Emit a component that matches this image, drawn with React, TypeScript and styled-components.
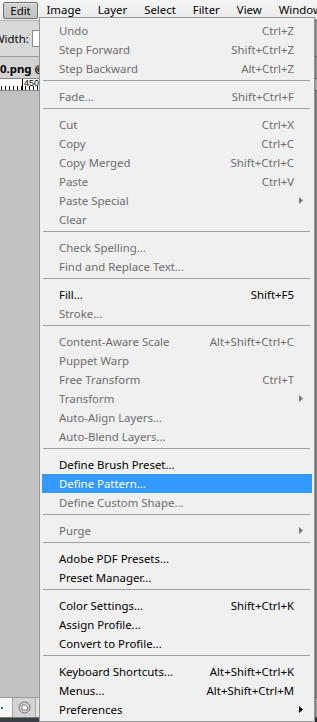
import styled, { createGlobalStyle } from "styled-components";

const GlobalStyle = createGlobalStyle`
  html, body {
    margin: 0;
    padding: 0;
    background: #c2c2c2;
  }
  body {
    font-family: "Noto Sans", "Segoe UI", sans-serif;
    font-size: 11.4px;
  }
`;

const Window = styled.div`
  position: relative;
  width: 317px;
  height: 722px;
  overflow: hidden;
  display: flex;
  flex-direction: column;
  background: #c2c2c2;
`;

const MenuBar = styled.div`
  height: 20px;
  flex-shrink: 0;
  display: flex;
  align-items: center;
  padding-left: 3px;
  overflow: hidden;
  background: linear-gradient(#f5f5f5, #ebebeb);
  border-bottom: 1px solid #b4b4b4;
  white-space: nowrap;
`;

const MenuTitle = styled.div<{ $active?: boolean }>`
  flex-shrink: 0;
  height: 17px;
  line-height: 16px;
  padding: 0 8.5px;
  box-sizing: border-box;
  color: #000;
  ${(p) =>
    p.$active &&
    `
    width: 35px;
    padding: 0;
    text-align: center;
    background: linear-gradient(#d2d2d2, #c2c2c2);
    border: 1px solid #6f6f6f;
    border-radius: 2px;
    box-shadow: inset 0 1px 0 #e4e4e4;
  `}
`;

const OptionsBar = styled.div`
  height: 35px;
  flex-shrink: 0;
  display: flex;
  align-items: center;
  gap: 3px;
  background: #d9d9d9;
  border-bottom: 1px solid #9c9c9c;
`;

const OptionLabel = styled.span`
  margin-left: -6px;
  color: #000;
`;

const OptionInput = styled.div`
  width: 40px;
  height: 15px;
  background: #fff;
  border: 1px solid #8e8e8e;
`;

const DocTab = styled.div`
  height: 22px;
  flex-shrink: 0;
  box-sizing: border-box;
  display: flex;
  align-items: flex-end;
  padding-bottom: 2px;
  background: #d3d3d3;
  border-bottom: 1px solid #8a8a8a;
  font-weight: bold;
  color: #000;
  white-space: nowrap;
`;

const Ruler = styled.div`
  position: relative;
  height: 11px;
  flex-shrink: 0;
  background: #fff;
  border-bottom: 1px solid #8a8a8a;
`;

const RulerNum = styled.span`
  position: absolute;
  left: 24px;
  top: -1px;
  font-family: "Liberation Sans", Arial, sans-serif;
  font-size: 9px;
  line-height: 10px;
  color: #000;
`;

const Canvas = styled.div`
  flex: 1;
  background: #c2c2c2;
`;

const StatusBar = styled.div`
  height: 19px;
  flex-shrink: 0;
  display: flex;
  border-top: 1px solid #9a9a9a;
  border-bottom: 1px solid #7a7a7a;
  background: #e2e2e2;
`;

const StatusField = styled.div`
  width: 12px;
  background: #f7f7f7;
  border-right: 1px solid #a6a6a6;
  position: relative;
  &::after {
    content: "";
    position: absolute;
    left: 1px;
    top: 9px;
    width: 2px;
    height: 2px;
    background: #2a5fb0;
  }
`;

const StatusButton = styled.div`
  width: 22px;
  display: flex;
  align-items: center;
  justify-content: center;
  background: #d4d4d4;
  border-right: 1px solid #a6a6a6;
`;

const BottomStrip = styled.div`
  height: 4px;
  flex-shrink: 0;
  background: #3b3f45;
`;

const Dropdown = styled.div`
  position: absolute;
  left: 39px;
  top: 17px;
  width: 274px;
  padding: 3px 0 2px;
  background: #f0f0f0;
  border: 1px solid #979797;
  box-shadow: 2px 2px 2px rgba(0, 0, 0, 0.45);
`;

const Row = styled.div<{ $disabled?: boolean; $hover?: boolean }>`
  height: 19px;
  margin: 0 2px;
  padding-left: 17px;
  display: grid;
  grid-template-columns: 1fr auto 18px;
  align-items: center;
  white-space: nowrap;
  color: ${(p) => (p.$hover ? "#fff" : p.$disabled ? "#6d6d6d" : "#000")};
  background: ${(p) => (p.$hover ? "#3399ff" : "transparent")};
`;

const Shortcut = styled.span`
  text-align: right;
`;

const ArrowCell = styled.span`
  display: flex;
  align-items: center;
  padding-left: 5px;
`;

const Separator = styled.div`
  height: 1px;
  margin: 2px 4px 6px 3px;
  background: #a0a0a0;
`;

type Item =
  | "sep"
  | { label: string; sc?: string; dis?: boolean; sub?: boolean; hover?: boolean };

const items: Item[] = [
  { label: "Undo", sc: "Ctrl+Z", dis: true },
  { label: "Step Forward", sc: "Shift+Ctrl+Z", dis: true },
  { label: "Step Backward", sc: "Alt+Ctrl+Z", dis: true },
  "sep",
  { label: "Fade...", sc: "Shift+Ctrl+F", dis: true },
  "sep",
  { label: "Cut", sc: "Ctrl+X", dis: true },
  { label: "Copy", sc: "Ctrl+C", dis: true },
  { label: "Copy Merged", sc: "Shift+Ctrl+C", dis: true },
  { label: "Paste", sc: "Ctrl+V", dis: true },
  { label: "Paste Special", sub: true, dis: true },
  { label: "Clear", dis: true },
  "sep",
  { label: "Check Spelling...", dis: true },
  { label: "Find and Replace Text...", dis: true },
  "sep",
  { label: "Fill...", sc: "Shift+F5" },
  { label: "Stroke...", dis: true },
  "sep",
  { label: "Content-Aware Scale", sc: "Alt+Shift+Ctrl+C", dis: true },
  { label: "Puppet Warp", dis: true },
  { label: "Free Transform", sc: "Ctrl+T", dis: true },
  { label: "Transform", sub: true, dis: true },
  { label: "Auto-Align Layers...", dis: true },
  { label: "Auto-Blend Layers...", dis: true },
  "sep",
  { label: "Define Brush Preset..." },
  { label: "Define Pattern...", hover: true },
  { label: "Define Custom Shape...", dis: true },
  "sep",
  { label: "Purge", sub: true, dis: true },
  "sep",
  { label: "Adobe PDF Presets..." },
  { label: "Preset Manager..." },
  "sep",
  { label: "Color Settings...", sc: "Shift+Ctrl+K" },
  { label: "Assign Profile..." },
  { label: "Convert to Profile..." },
  "sep",
  { label: "Keyboard Shortcuts...", sc: "Alt+Shift+Ctrl+K" },
  { label: "Menus...", sc: "Alt+Shift+Ctrl+M" },
  { label: "Preferences", sub: true },
];

function SubArrow({ color }: { color: string }) {
  return (
    <svg width="4" height="7" viewBox="0 0 4 7">
      <polygon points="0,0 4,3.5 0,7" fill={color} />
    </svg>
  );
}

function RulerTicks() {
  const ticks = [];
  for (let x = 1; x < 40; x += 4) {
    ticks.push(<line key={x} x1={x + 0.5} y1={7} x2={x + 0.5} y2={11} stroke="#000" />);
  }
  return (
    <svg width="40" height="11" style={{ display: "block" }}>
      {ticks}
      <line x1="22.5" y1="0" x2="22.5" y2="11" stroke="#000" />
    </svg>
  );
}

function StatusIcon() {
  return (
    <svg width="13" height="13" viewBox="0 0 13 13">
      <circle cx="6.5" cy="6.5" r="5.5" fill="#d9d9d9" stroke="#6a6a6a" />
      <path d="M4 4h3.5l2 2v3H4z" fill="#fff" stroke="#555" strokeWidth="0.8" />
    </svg>
  );
}

const titles = ["Image", "Layer", "Select", "Filter", "View", "Window"];

export default function App() {
  return (
    <Window>
      <GlobalStyle />
      <MenuBar>
        <MenuTitle $active>Edit</MenuTitle>
        {titles.map((t) => (
          <MenuTitle key={t}>{t}</MenuTitle>
        ))}
      </MenuBar>
      <OptionsBar>
        <OptionLabel>Width:</OptionLabel>
        <OptionInput />
      </OptionsBar>
      <DocTab>0.png @</DocTab>
      <Ruler>
        <RulerTicks />
        <RulerNum>450</RulerNum>
      </Ruler>
      <Canvas />
      <StatusBar>
        <StatusField />
        <StatusButton>
          <StatusIcon />
        </StatusButton>
      </StatusBar>
      <BottomStrip />

      <Dropdown>
        {items.map((it, i) =>
          it === "sep" ? (
            <Separator key={i} />
          ) : (
            <Row key={i} $disabled={it.dis} $hover={it.hover}>
              <span>{it.label}</span>
              <Shortcut>{it.sc}</Shortcut>
              <ArrowCell>{it.sub && <SubArrow color={it.dis ? "#7a7a7a" : "#000"} />}</ArrowCell>
            </Row>
          )
        )}
      </Dropdown>
    </Window>
  );
}
